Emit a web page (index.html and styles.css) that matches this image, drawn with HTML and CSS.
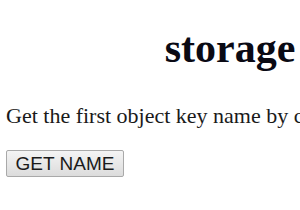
FILE: index.html
```html
<!DOCTYPE html>
<html lang="en">

<head>
    <meta charset="UTF-8" />
    <meta name="viewport" content="width=device-width, initial-scale=1.0" />
    <title>storage</title>
    <link rel="stylesheet" href="styles.css">
</head>

<body>
    <div class="page">
        <h1 class="title">storage</h1>
        <p class="intro">Get the first object key name by clicking the button below.</p>
        <button class="get-name" data-getname>GET NAME</button>
    </div>
</body>

</html>
```

FILE: styles.css
```css
* {
    margin: 0;
    padding: 0;
    box-sizing: border-box;
}

body {
    font-family: 'Liberation Serif', 'Times New Roman', serif;
    background: #fff;
    color: #111;
}

.page {
    width: 454px;
    padding: 0 0 0 6px;
    display: flex;
    flex-direction: column;
    align-items: flex-start;
}

.title {
    align-self: stretch;
    text-align: center;
    font-size: 42px;
    line-height: 46px;
    font-weight: bold;
    margin-top: 25px;
    color: #0a0a14;
}

.intro {
    font-size: 22px;
    line-height: 24px;
    margin-top: 33px;
    white-space: nowrap;
    color: #1a1a1a;
}

.get-name {
    margin-top: 22px;
    width: 118px;
    height: 27px;
    font-family: 'Liberation Sans', Arial, sans-serif;
    font-size: 19px;
    color: #1a1a1a;
    background: linear-gradient(#f4f4f4, #dcdcdc);
    border: 1px solid #a9a9a9;
    border-radius: 2px;
    cursor: pointer;
}
```
